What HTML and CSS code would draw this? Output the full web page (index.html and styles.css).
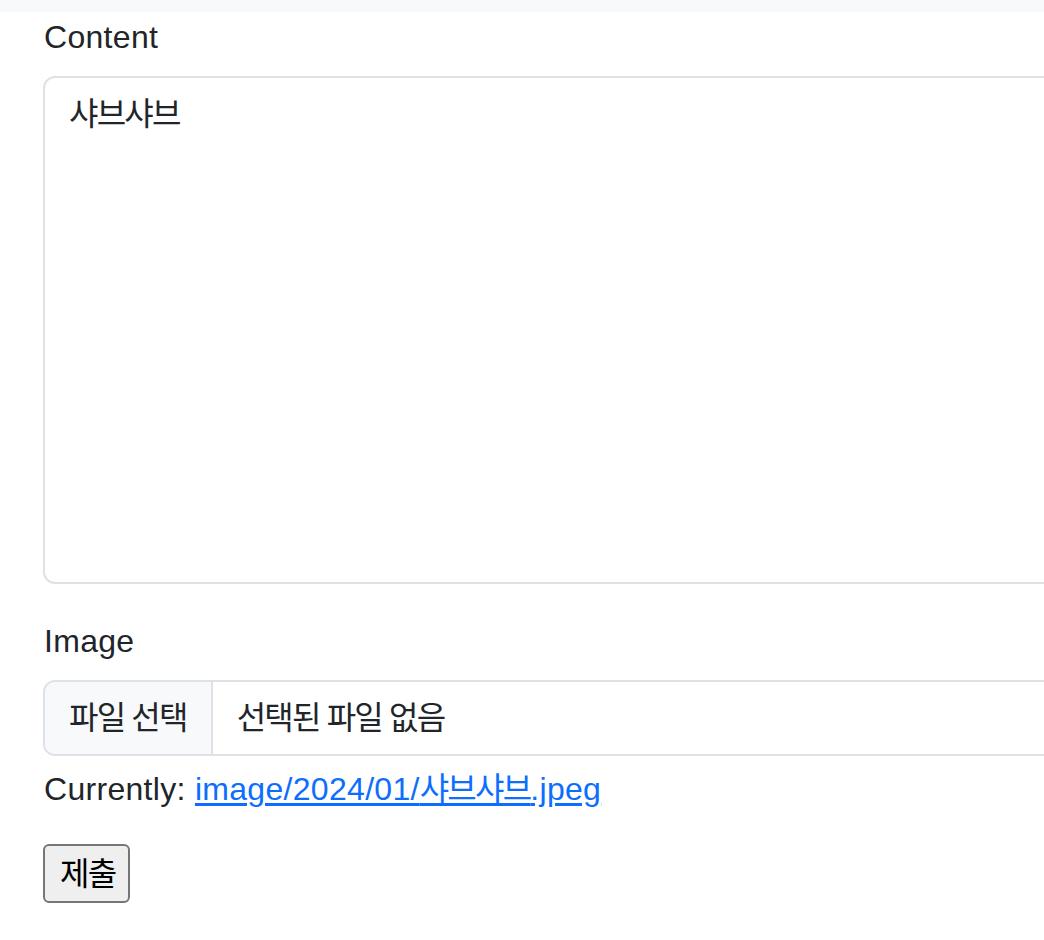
FILE: index.html
```html
<!DOCTYPE html>
<html lang="ko">
<head>
<meta charset="utf-8">
<title>Edit</title>
<link rel="stylesheet" href="styles.css">
</head>
<body>
<div class="page">
  <div class="topbar"></div>
  <form class="form">
    <div class="field">
      <label class="form-label" for="content">Content</label>
      <textarea class="form-control textarea ko" id="content">샤브샤브</textarea>
    </div>
    <div class="field-image">
      <label class="form-label">Image</label>
      <div class="file-control">
        <span class="file-button ko">파일 선택</span>
        <span class="file-name ko">선택된 파일 없음</span>
      </div>
    </div>
    <p class="current">Currently: <a class="link" href="#">image/2024/01/<span class="ko">샤브샤브</span>.jpeg</a></p>
    <button type="button" class="submit ko">제출</button>
  </form>
</div>
</body>
</html>
```

FILE: styles.css
```css
html, body {
  margin: 0;
  padding: 0;
  background: #ffffff;
  overflow: hidden;
}

.page {
  width: 1044px;
  height: 940px;
  overflow: hidden;
  font-family: "Liberation Sans", "Noto Sans CJK KR", sans-serif;
  font-size: 32px;
  line-height: 48px;
  color: #212529;
  letter-spacing: 0.3px;
}

.ko {
  letter-spacing: -1.8px;
}

.topbar {
  height: 12px;
  background: #f8f9fa;
}

.form {
  padding-left: 43px;
  width: 1100px;
}

.field {
  margin-bottom: 32px;
}

.form-label {
  display: block;
  margin-bottom: 15px;
  padding-left: 1px;
  padding-top: 1px;
  height: 48px;
}

.textarea {
  display: block;
  box-sizing: border-box;
  width: 1100px;
  height: 508px;
  margin: 0;
  padding: 12px 24px;
  border: 2px solid #dee2e6;
  border-radius: 12px;
  font-family: "Liberation Sans", "Noto Sans CJK KR", sans-serif;
  font-size: 32px;
  line-height: 48px;
  color: #212529;
  resize: none;
  outline: none;
  background: #ffffff;
}

.file-control {
  display: flex;
  box-sizing: border-box;
  width: 1100px;
  height: 76px;
  border: 2px solid #dee2e6;
  border-radius: 12px;
  overflow: hidden;
}

.file-button {
  display: flex;
  align-items: center;
  padding: 0 24px;
  background: #f8f9fa;
  border-right: 2px solid #dee2e6;
}

.file-name {
  display: flex;
  align-items: center;
  padding: 0 24px;
}

.current {
  margin: 9px 0 31px;
  padding-left: 1px;
}

.link {
  color: #0d6efd;
  text-decoration: underline;
  text-underline-offset: 3px;
}

.submit {
  display: block;
  box-sizing: border-box;
  height: 59px;
  margin: 0;
  padding: 0 13px 0 15px;
  font-family: "Liberation Sans", "Noto Sans CJK KR", sans-serif;
  font-size: 32px;
  line-height: 48px;
  color: #000000;
  background: #efefef;
  border: 2px solid #767676;
  border-radius: 6px;
}
```
